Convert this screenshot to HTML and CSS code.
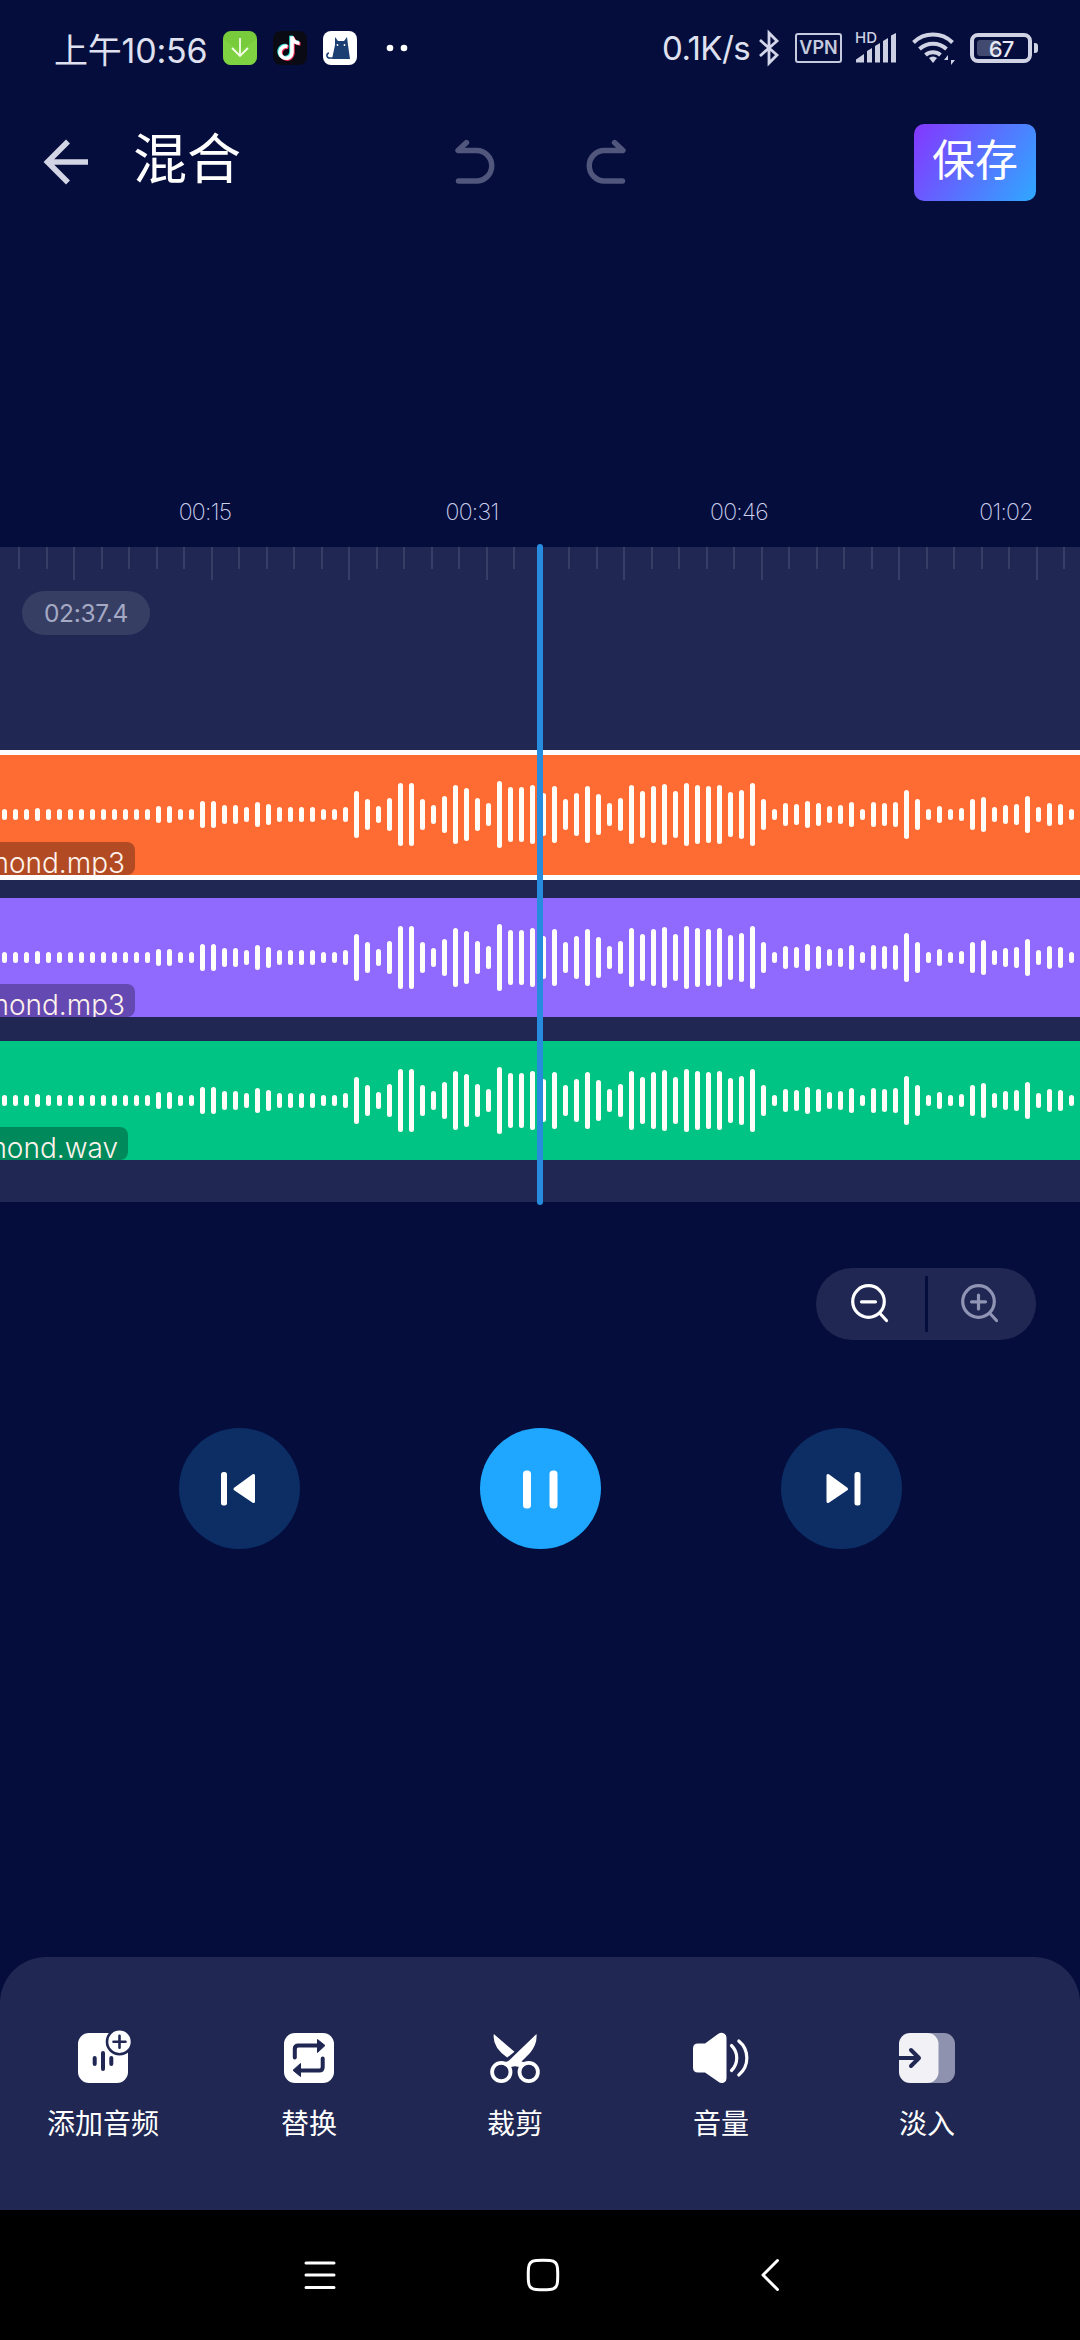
FILE: index.html
```html
<!DOCTYPE html>
<html lang="zh-CN">
<head>
<meta charset="utf-8">
<title>混合</title>
<link rel="stylesheet" href="styles.css">
</head>
<body>
<div class="status">
  <span class="clock">上午10:56</span>
  <div class="notifs">
    <svg width="34" height="34" viewBox="0 0 34 34"><rect width="34" height="34" rx="8" fill="#78cc3c"/><path d="M0 8 17 20 34 8V26a8 8 0 0 1-8 8H8a8 8 0 0 1-8-8z" fill="#84d544" opacity=".6"/><path d="M17 7v18M9 17l8 8 8-8" fill="none" stroke="#f4fbe9" stroke-width="1.8"/></svg>
    <svg width="34" height="34" viewBox="0 0 34 34"><rect width="34" height="34" rx="8" fill="#0a0a14"/><g fill="none" stroke-width="3.6"><path d="M14.5 15.5a6 6 0 1 0 4.500 6V5.500c.6 4 3.500 6.500 7.500 6.700" stroke="#35e0dc" transform="translate(-1 -.8)"/><path d="M14.500 15.500a6 6 0 1 0 4.500 6V5.500c.6 4 3.500 6.500 7.500 6.700" stroke="#f5305a" transform="translate(1 .8)"/><path d="M14.500 15.500a6 6 0 1 0 4.500 6V5.500c.6 4 3.500 6.500 7.500 6.700" stroke="#fff"/></g></svg>
    <svg width="34" height="34" viewBox="0 0 34 34"><rect width="34" height="34" rx="8" fill="#fff"/><path d="M12 6l3 4h6l3-4 1 8 2 14H9l3-14z" fill="#1c3f73"/><path d="M10 27H7a2.500 2.500 0 0 1-1-5" fill="none" stroke="#1c3f73" stroke-width="1.600"/><circle cx="14.500" cy="14" r=".9" fill="#fff"/><circle cx="21.500" cy="14" r=".9" fill="#fff"/></svg>
  </div>
  <svg class="more" width="22" height="8" viewBox="0 0 22 8"><circle cx="4" cy="4" r="3.300" fill="#fff"/><circle cx="18" cy="4" r="3.300" fill="#fff"/></svg>
  <span class="speed">0.1K/s</span>
  <svg class="bt" width="20" height="34" viewBox="0 0 20 34"><path d="M1 9 18 24 10 32V2l8 8L1 25" fill="none" stroke="#d3d6e8" stroke-width="2.800"/></svg>
  <span class="vpn">VPN</span>
  <div class="signal"><svg width="41" height="30" viewBox="0 0 41 30"><path d="M1 29.500v-3L9 21v8.500zM12 29.500V18l5-3v14.500zM20 29.500V13l5-3v19.500zM28 29.500V8l5-3v24.500zM36 29.500V2.500L41 0v29.500z" fill="#ccd0e2"/></svg><span class="hd">HD</span></div>
  <svg class="wifi" width="43" height="34" viewBox="0 0 43 34"><g fill="none" stroke="#d0d3e4" stroke-width="4"><path d="M1.500 11.500a28 28 0 0 1 39 0"/><path d="M7.500 18a20 20 0 0 1 27 0"/><path d="M13.500 24a11.500 11.500 0 0 1 15 0"/></g><path d="M17 27a6 6 0 0 1 8 0l-4 5z" fill="#d0d3e4"/><path d="M36 34V24l-4 5h4M39 24v10l4-5h-4" fill="#d0d3e4"/></svg>
  <div class="battery"><i class="charge"></i><span class="level">67</span></div><i class="nub"></i>
</div>
<header class="header">
  <svg class="back" width="46" height="46" viewBox="0 0 46 46"><path d="M45 23H5M25 2.500 4.500 23 25 43.500" fill="none" stroke="#d3d5e4" stroke-width="5.600"/></svg>
  <h1 class="title">混合</h1>
  <svg class="undo" width="40" height="46" viewBox="0 0 40 46"><path d="M11.500 3.500 3 11.500H21.500a15.200 15.200 0 0 1 0 30.500H3.500" class="line dim"/></svg>
  <svg class="redo" width="40" height="46" viewBox="0 0 40 46"><path d="M28.500 3.500 37 11.500H18.500a15.200 15.200 0 0 0 0 30.500H36.500" class="line dim"/></svg>
  <button class="save">保存</button>
</header>
<div class="times"><span>00:15</span><span>00:31</span><span>00:46</span><span>01:02</span></div>
<main class="timeline">
  <svg class="ruler" width="1080" height="34"></svg>
  <div class="total">02:37.4</div>
  <div class="track orange selected"><svg class="wave" width="1080" height="119"></svg><div class="name">mond.mp3</div></div>
  <div class="track purple"><svg class="wave" width="1080" height="119"></svg><div class="name">mond.mp3</div></div>
  <div class="track green"><svg class="wave" width="1080" height="119"></svg><div class="name wav">mond.wav</div></div>
  <div class="playhead"></div>
</main>
<div class="zoom">
  <svg width="109" height="72" viewBox="0 0 109 72"><g fill="none" stroke="#fff" stroke-width="3.200" stroke-linecap="round"><circle cx="52.500" cy="33.500" r="15.800"/><path d="M45.500 33.800h14M64.500 46l6 6.500"/></g></svg>
  <i class="split"></i>
  <svg width="108" height="72" viewBox="0 0 108 72"><g fill="none" stroke="#9095b5" stroke-width="3.200" stroke-linecap="round"><circle cx="50.500" cy="33.500" r="15.800"/><path d="M43.500 33.800h14M50.500 27v14M62.500 46l6 6.500"/></g></svg>
</div>
<div class="player">
  <svg class="disc" viewBox="0 0 121 121"><rect x="42" y="44" width="6" height="33.500" rx="2.500" fill="#fff"/><path d="M56 61 74.500 47.500V73.500z" class="tri"/></svg>
  <svg class="disc on" viewBox="0 0 121 121"><rect x="43" y="42.500" width="8" height="38" rx="3.500" fill="#fff"/><rect x="69.500" y="42.500" width="8" height="38" rx="3.500" fill="#fff"/></svg>
  <svg class="disc" viewBox="0 0 121 121"><rect x="73.500" y="44" width="6" height="33.500" rx="2.500" fill="#fff"/><path d="M65.500 61 47 47.500V73.500z" class="tri"/></svg>
</div>
<nav class="tools">
  <div class="tool"><svg width="50" height="50" viewBox="0 0 50 50"><rect width="50" height="50" rx="11" fill="#fff"/><g fill="none" stroke="#1f2752" stroke-linecap="round"><path d="M16.700 25v6M25 20v16M33.300 25v6" stroke-width="4"/><circle cx="41.500" cy="8.700" r="12.500" fill="#fff" stroke-width="2.600"/><path d="M35.500 8.700h12M41.500 2.700v12" stroke-width="2.600"/></g></svg><span>添加音频</span></div>
  <div class="tool"><svg width="50" height="50" viewBox="0 0 50 50"><rect width="50" height="50" rx="11" fill="#fff"/><path d="M10.800 24.500V16q0-3.500 3.500-3.500H34M38.700 25.500V34q0 3.500-3.500 3.500H16" fill="none" stroke="#1f2752" stroke-width="4" stroke-linecap="round"/><path d="M33.500 6.500 41 12.500 33.500 19.500zM16.500 30.500 9 37.300 16.500 43.500z" fill="#1f2752" stroke="#1f2752" stroke-linejoin="round"/></svg><span>替换</span></div>
  <div class="tool"><svg width="52" height="50" viewBox="0 0 52 50"><g fill="none" stroke="#fff" stroke-width="3.800"><circle cx="12.300" cy="39" r="9.200"/><circle cx="39.700" cy="39" r="9.200"/></g><path d="M4.800 1 25.500 18.800 18.200 24.500Q3 14 4.800 1zM47.500 1Q48.500 11 41 20L32.500 28.500 39 30.500 32.500 35Q26 31.500 19.500 35L11 29.500Q17 29.500 20 27.500z" fill="#fff"/></svg><span>裁剪</span></div>
  <div class="tool"><svg width="56" height="50" viewBox="0 0 56 50"><path d="M5 10.500h7L25 1q3.500-2 6-.5 2.500 1 2.500 4v41q0 3-2.500 4-3 1.500-6-1L12 39.500H5q-5 0-5-5v-19q0-5 5-5z" fill="#fff"/><path d="M38.500 12.500a17.500 17.500 0 0 1 0 25M45.800 8a22 22 0 0 1 0 34" fill="none" stroke="#fff" stroke-width="3.200" stroke-linecap="round"/></svg><span>音量</span></div>
  <div class="tool"><svg width="56" height="50" viewBox="0 0 56 50"><rect x="20" width="36" height="50" rx="11" fill="#8e92ae"/><rect width="39.500" height="50" rx="11" fill="#f2f2f6"/><path d="M0 25h19M12 17l8 8-8 8" fill="none" stroke="#1f2752" stroke-width="4" stroke-linecap="round" stroke-linejoin="round"/></svg><span>淡入</span></div>
</nav>
<footer class="sysnav">
  <svg width="32" height="34" viewBox="0 0 32 34"><path d="M2 5h28M2 17h28M2 29.500h28" class="nav"/></svg>
  <svg width="34" height="34" viewBox="0 0 34 34"><path d="M10 2.500Q17 2 24 2.500 31 3 31.500 10 32 17 31.500 24 31 31 24 31.500 17 32 10 31.500 3 31 2.500 24 2 17 2.500 10 3 3 10 2.500z" class="nav"/></svg>
  <svg width="20" height="34" viewBox="0 0 20 34"><path d="M17.500 2.500 3 17l14.500 14.500" class="nav"/></svg>
</footer>
<script src="script.js"></script>
</body>
</html>
```
FILE: styles.css
```css
* { box-sizing: border-box; }
body {
  margin: 0;
  width: 1080px;
  height: 2340px;
  display: flex;
  flex-direction: column;
  overflow: hidden;
  background: #050d3c;
  color: #fff;
  font-family: Inter, "Noto Sans CJK SC", sans-serif;
}
svg { display: block; flex: none; overflow: visible; }

.status { height: 96px; flex: none; display: flex; align-items: center; padding: 0 42px 0 54px; color: #dfe1f0; }
.clock { width: 169px; font-size: 34px; letter-spacing: -0.2px; white-space: nowrap; }
.notifs { display: flex; gap: 16px; }
.more { margin-left: 29px; }
.speed { margin-left: auto; margin-right: 9px; font-size: 33px; letter-spacing: -0.6px; white-space: nowrap; }
.bt { margin-right: 16px; }
.vpn {
  width: 47px; height: 30px; margin-right: 13px;
  border: 2.500px solid #c6cade; border-radius: 3px;
  font-size: 18px; line-height: 26px; font-weight: 600; text-align: center; color: #c6cade;
}
.signal { position: relative; margin-right: 16px; }
.hd { position: absolute; left: 0; top: -3px; font-size: 15px; line-height: 15px; font-weight: 500; color: #ccd0e2; }
.wifi { margin-right: 15px; }
.battery {
  position: relative; width: 62px; height: 30px;
  border: 4px solid #d0d3e4; border-radius: 8px;
  font-size: 22px; line-height: 24px; text-align: center; font-weight: 500; color: #e6e8f3;
}
.charge { position: absolute; left: 3px; top: 3px; width: 21px; height: 16px; border-radius: 3px; background: #434a70; }
.level { position: relative; letter-spacing: -1px; }
.nub { width: 4px; height: 10px; margin-left: 2px; border-radius: 0 3px 3px 0; background: #d0d3e4; }

.header { height: 132px; flex: none; display: flex; align-items: center; padding: 0 44px 0 43px; }
.title { margin: 0 214px 0 44px; width: 108px; font-size: 54px; font-weight: 400; line-height: 80px; padding-bottom: 4px; }
.line { fill: none; stroke-width: 5.400px; stroke-linecap: round; stroke-linejoin: round; }
.dim { stroke: #50567c; }
.redo { margin-left: 91px; }
.save {
  width: 122px; height: 77px; margin-left: auto; padding: 0 0 10px;
  border: 0; border-radius: 10px; color: #fff;
  background: linear-gradient(122deg, #8437ff, #2fa8ff);
  font: 400 43px/60px "Noto Sans CJK SC", sans-serif;
}

.times { height: 319px; flex: none; display: flex; align-items: flex-end; justify-content: space-between; padding: 0 7px 21px 138px; font-size: 23px; line-height: 28px; font-weight: 200; letter-spacing: -0.7px; color: #cdd1ef; }
.times span { width: 134px; flex: none; text-align: center; }

.timeline { position: relative; height: 655px; flex: none; background: #1f2752; }
.ruler rect { fill: #363e66; }
.total {
  width: 128px; height: 44px; margin: 10px 0 0 22px; border-radius: 22px;
  background: #363e64; color: #a5a9c4; font-size: 24.5px; line-height: 44px; text-align: center; letter-spacing: -0.3px;
}
.track { position: relative; height: 119px; margin-bottom: 24px; overflow: hidden; }
.selected { height: 130px; margin: 115px 0 18px; border: solid #fff; border-width: 5.500px 0; }
.orange { background-color: #ff6c33; }
.purple { background-color: #9069ff; }
.green { background-color: #00c483; }
.wave path { stroke: #fffdf8; stroke-width: 5px; stroke-linecap: round; }
.name {
  position: absolute; left: 0; bottom: 0; width: 135px; height: 33px; padding-right: 10px;
  display: flex; justify-content: flex-end; border-radius: 0 8px 8px 0;
  background: rgba(0, 0, 0, .3); font-size: 28px; line-height: 43px; font-weight: 300; overflow: hidden; color: #fff3ec;
}
.wav { width: 128px; }
.playhead { position: absolute; left: 537px; top: -3px; width: 6px; height: 661px; border-radius: 3px; background: #278cde; }

.zoom { flex: none; align-self: flex-end; width: 220px; height: 72px; margin: 66px 44px 0 0; display: flex; align-items: center; border-radius: 36px; background: #1f2752; }
.split { width: 3px; height: 56px; background: #050d3c; }

.player { flex: none; margin: 88px 178.500px 0 179px; display: flex; justify-content: space-between; }
.disc { width: 121px; height: 121px; border-radius: 50%; background: #0c2e65; }
.on { background: #1fa7ff; }
.tri { fill: #fff; stroke: #fff; stroke-width: 3px; stroke-linejoin: round; }

.tools { height: 253px; margin-top: auto; flex: none; display: flex; padding: 76px 0 0; border-radius: 46px 46px 0 0; background: #1f2752; }
.tool { width: 206px; flex: none; display: flex; flex-direction: column; align-items: center; gap: 20px; font-size: 28px; line-height: 42px; }
.sysnav { height: 130px; flex: none; display: flex; align-items: center; padding: 0 0 0 304px; background: #000; }
.sysnav svg:nth-child(2) { margin: 0 200px 0 190px; }
.nav { fill: none; stroke: #fff; stroke-width: 3px; stroke-linecap: round; stroke-linejoin: round; }
```
FILE: script.js
```js
// Bar heights of the visible part of the clip, left to right.
const peaks = [
  11,11,11,13,11,11,11,11,11,11,11,11,11,11,17,17,11,11,27,27,19,19,15,25,21,15,15,15,15,11,11,15,47,
  31,17,33,63,63,31,19,37,59,53,33,23,67,55,55,59,43,57,31,43,57,41,23,33,59,47,57,61,47,63,59,57,59,
  45,49,63,31,11,23,21,27,23,17,19,25,11,25,23,25,49,31,11,17,11,13,31,35,15,19,21,37,15,23,21,11
];
const bars = peaks.map((h, i) => `M${4.5 + i * 11} ${59.5 - (h - 5) / 2}v${h - 5}`).join('');
document.querySelectorAll('.wave').forEach(w => { w.innerHTML = `<path d="${bars}"/>`; });

// Ruler: every fifth tick is long.
let ticks = '';
for (let i = 0; i < 39; i++) {
  ticks += `<rect x="${Math.round(18 + i * 27.5)}" width="2" height="${i % 5 === 2 ? 33 : 22}"/>`;
}
document.querySelector('.ruler').innerHTML = ticks;
```
